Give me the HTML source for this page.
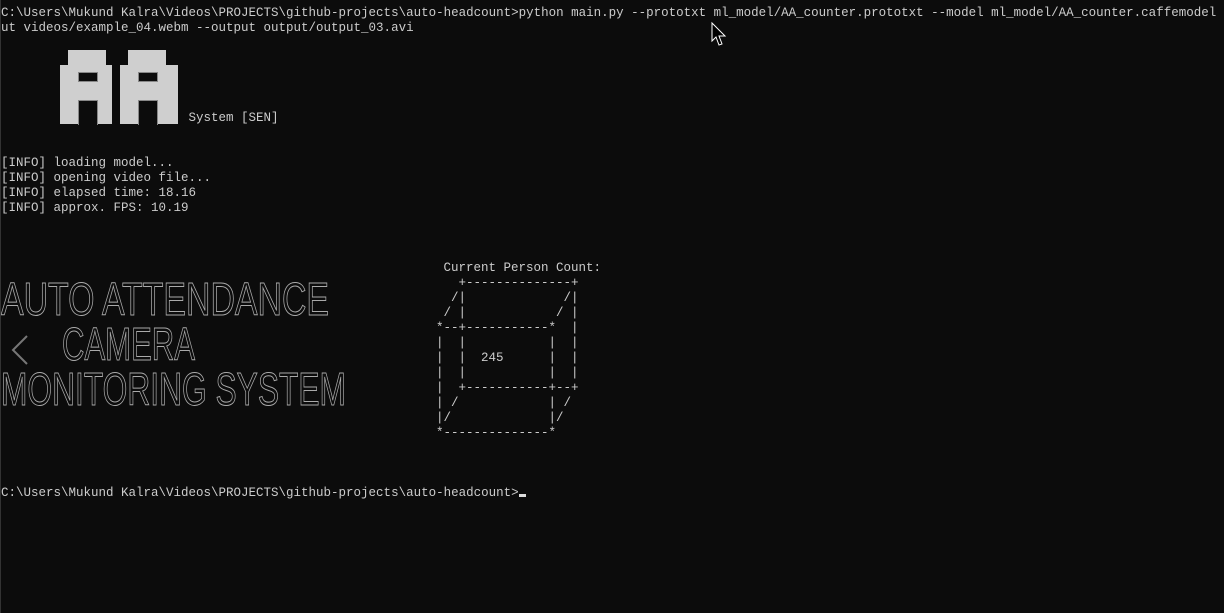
<!DOCTYPE html>
<html><head><meta charset="utf-8"><style>
html,body{margin:0;padding:0;background:#0c0c0c;width:1224px;height:613px;overflow:hidden;position:relative}
pre{margin:0;position:absolute;font-family:"Liberation Mono",monospace;font-size:12.5px;line-height:15px;color:#cccccc;white-space:pre}
.b{position:absolute;background:#cfcfcf}
</style></head><body>
<pre style="left:1px;top:6px">C:\Users\Mukund Kalra\Videos\PROJECTS\github-projects\auto-headcount>python main.py --prototxt ml_model/AA_counter.prototxt --model ml_model/AA_counter.caffemodel
ut videos/example_04.webm --output output/output_03.avi





                         System [SEN]


[INFO] loading model...
[INFO] opening video file...
[INFO] elapsed time: 18.16
[INFO] approx. FPS: 10.19


















C:\Users\Mukund Kalra\Videos\PROJECTS\github-projects\auto-headcount></pre>
<div style="position:absolute;left:519px;top:494px;width:7px;height:3px;background:#ddd"></div>
<pre style="left:436px;top:261px"> Current Person Count:
   +--------------+
  /|             /|
 / |            / |
*--+-----------*  |
|  |           |  |
|  |  245      |  |
|  |           |  |
|  +-----------+--+
| /            | /
|/             |/
*--------------*</pre>
<!-- AA logo -->
<div class="b" style="left:68px;top:50px;width:38px;height:74px"></div>
<div class="b" style="left:60px;top:65px;width:8px;height:59px"></div>
<div style="position:absolute;left:78px;top:72px;width:18px;height:8px;background:#0c0c0c;border:1px solid #888"></div>
<div style="position:absolute;left:78px;top:100px;width:18px;height:24px;background:#0c0c0c;border:1px solid #888;border-bottom:none"></div>
<div class="b" style="left:106px;top:65px;width:6px;height:59px"></div>
<div class="b" style="left:128px;top:50px;width:38px;height:74px"></div>
<div class="b" style="left:120px;top:65px;width:8px;height:59px"></div>
<div style="position:absolute;left:138px;top:72px;width:18px;height:8px;background:#0c0c0c;border:1px solid #888"></div>
<div style="position:absolute;left:138px;top:100px;width:18px;height:24px;background:#0c0c0c;border:1px solid #888;border-bottom:none"></div>
<div class="b" style="left:166px;top:65px;width:12px;height:59px"></div>
<svg width="1224" height="613" style="position:absolute;left:0;top:0">
<g font-family="Liberation Sans,sans-serif" font-size="46" fill="none" stroke="#aaa" stroke-width="1">
<text x="1" y="315" textLength="328" lengthAdjust="spacingAndGlyphs">AUTO ATTENDANCE</text>
<text x="62" y="360" textLength="133" lengthAdjust="spacingAndGlyphs">CAMERA</text>
<text x="1" y="405" textLength="345" lengthAdjust="spacingAndGlyphs">MONITORING SYSTEM</text>
</g>
<path d="M27 336 L13 350 L27 364" fill="none" stroke="#777" stroke-width="2"/>
<path d="M712 23 L712 41 L716 37 L719 45 L722 44 L719 36 L725 36 Z" fill="#000" stroke="#fff" stroke-width="1"/>
<line x1="0.5" y1="0" x2="0.5" y2="613" stroke="#333"/>
</svg>
</body></html>
